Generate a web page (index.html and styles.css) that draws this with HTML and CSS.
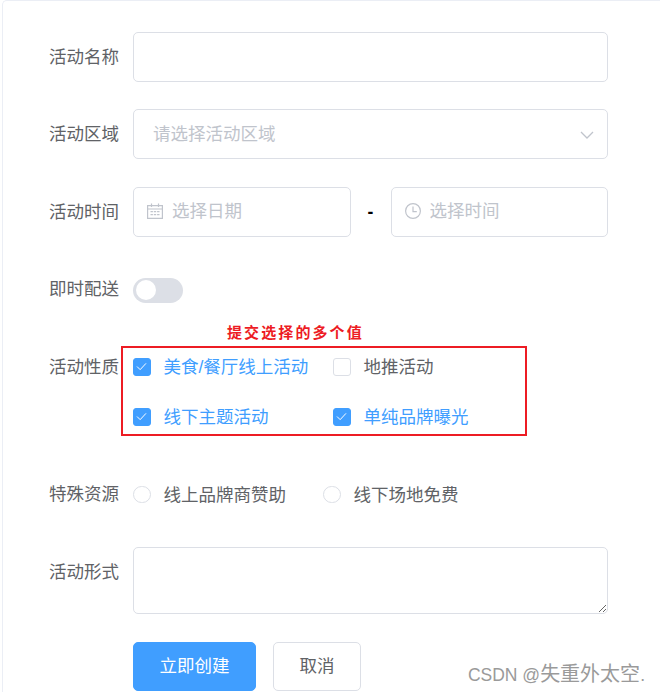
FILE: index.html
```html
<!DOCTYPE html>
<html lang="zh-CN">

<head>
    <meta charset="UTF-8">
    <title>活动表单</title>
    <link rel="stylesheet" href="styles.css">
</head>

<body>

    <div class="card">
        <form class="form">

            <div class="form-item">
                <label class="form-label">活动名称</label>
                <div class="form-content">
                    <input type="text" class="text-input">
                </div>
            </div>

            <div class="form-item">
                <label class="form-label">活动区域</label>
                <div class="form-content input-wrap">
                    <input type="text" class="text-input" placeholder="请选择活动区域" readonly>
                    <svg class="arrow-icon" viewBox="0 0 14 8" width="14" height="8">
                        <path d="M1 1l6 6 6-6" fill="none" stroke="#c0c4cc" stroke-width="1.3" />
                    </svg>
                </div>
            </div>

            <div class="form-item">
                <label class="form-label">活动时间</label>
                <div class="form-content time-row">
                    <div class="input-wrap">
                        <input type="text" class="text-input with-icon" placeholder="选择日期" readonly>
                        <svg class="prefix-icon" viewBox="0 0 16 16" width="16" height="16">
                            <path d="M.6 2.6h14.8v12.8H.6zM.6 6h14.8M4.5 .5v3.5M11.5 .5v3.5" fill="none" stroke="#c0c4cc" stroke-width="1.2" />
                            <path d="M3.5 8h2.4v1.2H3.5zM6.8 8h2.4v1.2H6.8zM10.1 8h2.4v1.2h-2.4zM3.5 11h2.4v1.2H3.5zM6.8 11h2.4v1.2H6.8zM10.1 11h2.4v1.2h-2.4z" fill="#c0c4cc" />
                        </svg>
                    </div>
                    <span class="time-dash">-</span>
                    <div class="input-wrap">
                        <input type="text" class="text-input with-icon" placeholder="选择时间" readonly>
                        <svg class="prefix-icon" viewBox="0 0 16 16" width="16" height="16">
                            <circle cx="8" cy="8" r="7.4" fill="none" stroke="#c0c4cc" stroke-width="1.2" />
                            <path d="M8 3.6V8.6h3.8" fill="none" stroke="#c0c4cc" stroke-width="1.2" />
                        </svg>
                    </div>
                </div>
            </div>

            <div class="form-item">
                <label class="form-label">即时配送</label>
                <div class="form-content">
                    <span class="switch"><span class="switch-knob"></span></span>
                </div>
            </div>

            <div class="form-item checkbox-item">
                <label class="form-label">活动性质</label>
                <div class="form-content checkbox-group">
                    <div class="option checked">
                        <span class="checkbox">
                            <svg viewBox="0 0 12 10" width="11" height="9">
                                <path d="M1 5l3.5 3.5L11 1.5" fill="none" stroke="#fff" stroke-width="1.1" />
                            </svg>
                        </span>
                        美食/餐厅线上活动
                    </div>
                    <div class="option">
                        <span class="checkbox"></span>
                        地推活动
                    </div>
                    <div class="option checked">
                        <span class="checkbox">
                            <svg viewBox="0 0 12 10" width="11" height="9">
                                <path d="M1 5l3.5 3.5L11 1.5" fill="none" stroke="#fff" stroke-width="1.1" />
                            </svg>
                        </span>
                        线下主题活动
                    </div>
                    <div class="option checked">
                        <span class="checkbox">
                            <svg viewBox="0 0 12 10" width="11" height="9">
                                <path d="M1 5l3.5 3.5L11 1.5" fill="none" stroke="#fff" stroke-width="1.1" />
                            </svg>
                        </span>
                        单纯品牌曝光
                    </div>
                </div>
                <div class="mark-box"></div>
                <div class="mark-text">提交选择的多个值</div>
            </div>

            <div class="form-item">
                <label class="form-label">特殊资源</label>
                <div class="form-content radio-group">
                    <div class="option"><span class="radio"></span>线上品牌商赞助</div>
                    <div class="option"><span class="radio"></span>线下场地免费</div>
                </div>
            </div>

            <div class="form-item">
                <label class="form-label">活动形式</label>
                <div class="form-content">
                    <textarea class="text-area"></textarea>
                </div>
            </div>

            <div class="form-item">
                <div class="form-label"></div>
                <div class="form-content buttons">
                    <button type="button" class="btn btn-primary">立即创建</button>
                    <button type="button" class="btn">取消</button>
                </div>
            </div>

        </form>
    </div>

    <div class="watermark">CSDN @<span class="watermark-cjk">失重外太空</span>.</div>

</body>

</html>
```

FILE: styles.css
```css
html,
body {
    height: 692px;
    overflow: hidden;
}

body {
    margin: 0;
    background-color: #fff;
    font-family: "Liberation Sans", "Noto Sans CJK SC", sans-serif;
    font-size: 17.5px;
    color: #606266;
    position: relative;
}

.card {
    margin-left: 2px;
    height: 720px;
    border: 1px solid #ebeef5;
    border-right: none;
    border-radius: 5px 0 0 5px;
    box-sizing: border-box;
    padding-top: 30.75px;
}

.form-item {
    display: flex;
    margin-bottom: 27.5px;
    position: relative;
}

.form-label {
    flex: none;
    width: 116px;
    padding-right: 14px;
    box-sizing: content-box;
    line-height: 50px;
    text-align: right;
}

.form-content {
    width: 475px;
    min-height: 50px;
}

.input-wrap {
    position: relative;
}

.text-input {
    display: block;
    width: 100%;
    height: 50px;
    box-sizing: border-box;
    padding: 0 19px;
    border: 1px solid #dcdfe6;
    border-radius: 5px;
    outline: none;
    font-family: inherit;
    font-size: 17.5px;
    color: #606266;
}

.text-input::placeholder {
    color: #c0c4cc;
}

.text-input.with-icon {
    padding-left: 38px;
}

.arrow-icon {
    position: absolute;
    right: 14px;
    top: 21.5px;
}

.prefix-icon {
    position: absolute;
    left: 14px;
    top: 16px;
}

.time-row {
    display: grid;
    grid-template-columns: 1fr 40px 1fr;
}

.time-dash {
    line-height: 50px;
    text-align: center;
    font-weight: 700;
    color: #000;
}

.switch {
    display: inline-block;
    position: relative;
    width: 50px;
    height: 25px;
    margin-top: 13.5px;
    border-radius: 13px;
    background-color: #dcdfe6;
}

.switch-knob {
    position: absolute;
    left: 3px;
    top: 2.5px;
    width: 20px;
    height: 20px;
    border-radius: 50%;
    background-color: #fff;
}

.option {
    display: flex;
    align-items: center;
    height: 48px;
    padding-bottom: 2px;
    white-space: nowrap;
}

.option.checked {
    color: #409eff;
}

.checkbox-group {
    display: grid;
    grid-template-columns: 200px 200px;
}

.checkbox {
    display: flex;
    align-items: center;
    justify-content: center;
    flex: none;
    width: 17.5px;
    height: 17.5px;
    margin-top: 2px;
    margin-right: 13px;
    box-sizing: border-box;
    border: 1px solid #dcdfe6;
    border-radius: 3px;
    background-color: #fff;
}

.option.checked .checkbox {
    border-color: #409eff;
    background-color: #409eff;
}

.radio-group {
    display: flex;
    gap: 37px;
}

.radio {
    flex: none;
    width: 17.5px;
    height: 17.5px;
    margin-top: 2px;
    margin-right: 13px;
    box-sizing: border-box;
    border: 1px solid #dcdfe6;
    border-radius: 50%;
}

.text-area {
    display: block;
    width: 100%;
    height: 67.5px;
    box-sizing: border-box;
    padding: 6px 19px;
    border: 1px solid #dcdfe6;
    border-radius: 5px;
    outline: none;
    resize: vertical;
    font-family: inherit;
    font-size: 17.5px;
}

.buttons {
    display: flex;
    gap: 17px;
}

.btn {
    height: 49px;
    padding: 0 25.5px 4px;
    border: 1px solid #dcdfe6;
    border-radius: 5px;
    background-color: #fff;
    font-family: inherit;
    font-size: 17.5px;
    color: #606266;
}

.btn-primary {
    border-color: #409eff;
    background-color: #409eff;
    color: #fff;
}

/* red annotation drawn over the checkbox group */
.mark-box {
    position: absolute;
    left: 118px;
    top: 4px;
    width: 402px;
    height: 86px;
    border: 2px solid #ed1c24;
}

.mark-text {
    position: absolute;
    left: 224px;
    top: -20px;
    font-size: 15px;
    line-height: 22px;
    font-weight: 700;
    letter-spacing: 2.1px;
    white-space: nowrap;
    color: #ed1c24;
}

.watermark {
    position: absolute;
    right: 15px;
    bottom: 4px;
    font-size: 17.5px;
    line-height: 26px;
    color: #9a9a9a;
    white-space: nowrap;
}

.watermark-cjk {
    font-size: 20px;
}
```
